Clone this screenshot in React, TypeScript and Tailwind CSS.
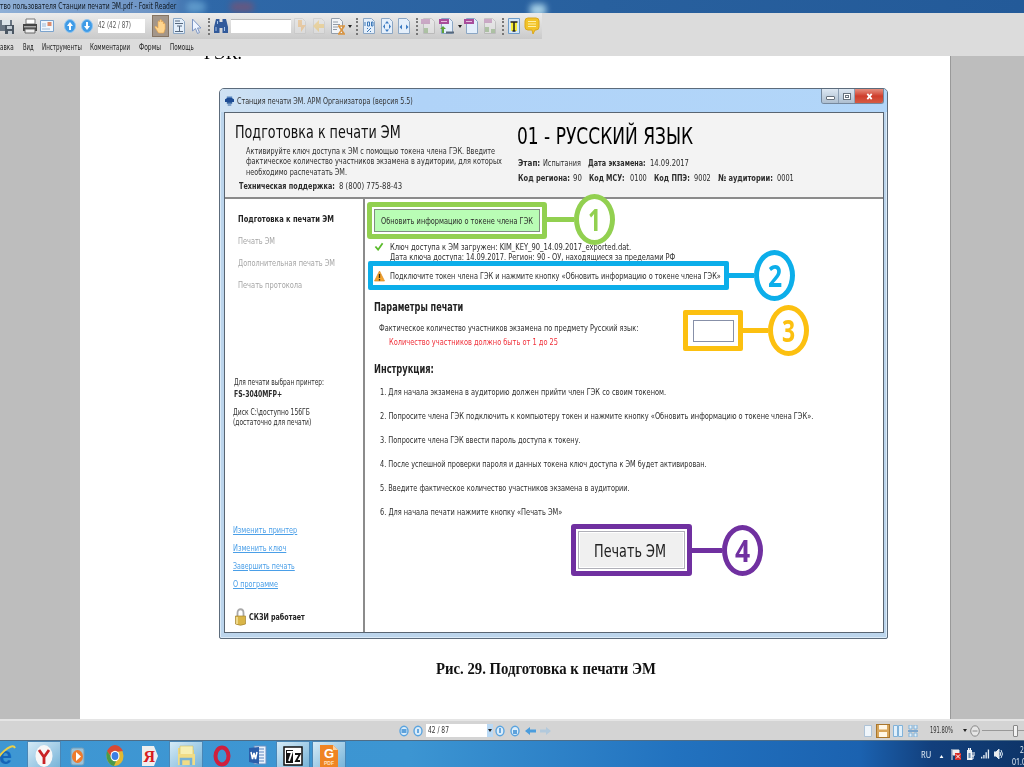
import { useLayoutEffect, useRef, type ReactNode } from "react";

/* Single line of text, condensed or stretched to the width of its box. */
function Fit({ className = "", children }: { className?: string; children: ReactNode }) {
  const box = useRef<HTMLDivElement>(null);
  const line = useRef<HTMLSpanElement>(null);
  useLayoutEffect(() => {
    if (box.current && line.current) {
      const ratio = box.current.clientWidth / line.current.offsetWidth;
      line.current.style.transform = `scaleX(${ratio})`;
    }
  }, []);
  return (
    <div ref={box} className={`flex shrink-0 items-center whitespace-nowrap ${className}`}>
      <span ref={line} className="inline-block shrink-0 origin-left">
        {children}
      </span>
    </div>
  );
}

function Ico({ className = "", children }: { className?: string; children: ReactNode }) {
  return (
    <svg viewBox="0 0 16 20" className={`h-5 w-4 shrink-0 ${className}`} fill="none">
      {children}
    </svg>
  );
}

const Dots = ({ className = "" }: { className?: string }) => (
  <div className={`h-[17px] w-0.5 shrink-0 border-l-2 border-dotted border-[#777] ${className}`} />
);

const Caret = ({ className = "" }: { className?: string }) => (
  <svg viewBox="0 0 4 3" className={`h-[3px] w-1 shrink-0 ${className}`}>
    <path d="M0 0h4L2 3z" fill="#222" />
  </svg>
);

const Sheet = ({ tint = "#e4effb", line = "#8ba6c4" }: { tint?: string; line?: string }) => (
  <path d="M2.5 2.5h8l3 3v12h-11z" fill={tint} stroke={line} />
);

function ArrowBall({ down = false, className = "" }: { down?: boolean; className?: string }) {
  return (
    <Ico className={className}>
      <ellipse cx="8" cy="10" rx="5.500" ry="6.500" fill="#3f9be6" stroke="#8fc4f0" />
      <path d={down ? "M8 14l-3-4h2V6h2v4h2z" : "M8 6l-3 4h2v4h2v-4h2z"} fill="#fff" />
    </Ico>
  );
}

function TitleBar() {
  return (
    <div className="flex h-[13px] shrink-0 items-center overflow-hidden bg-[linear-gradient(90deg,#8fafd6_0,#6d94c5_150px,#2f68a8_200px,#28609e_600px,#235a99_100%)] text-[9px] text-[#101820]">
      <Fit className="h-[13px] w-[176px]">тво пользователя Станции печати ЭМ.pdf - Foxit Reader</Fit>
      <div className="ml-2.5 h-3 w-5 rounded-full bg-[#79b6df] opacity-60 blur-[3px]" />
      <div className="ml-6 h-2.5 w-6 rounded-full bg-[#8c4d66] opacity-60 blur-[3px]" />
      <div className="ml-[276px] mt-1.5 h-3 w-4 rounded bg-[#a5cfe6] blur-[3px]" />
    </div>
  );
}

function Toolbar() {
  return (
    <div className="flex h-[26px] w-[542px] items-center overflow-hidden bg-linear-to-b from-[#ececec] to-[#cacaca]">
      <Ico>
        <path d="M0 4h12v11H0z" fill="#697582" />
        <path d="M2 4h8v5H2z" fill="#dce3e8" />
        <path d="M5 9h9v9H5z" fill="#4c5763" />
        <path d="M7 10h5v3H7zM8 15h4v3H8z" fill="#c3ccd4" />
      </Ico>
      <Ico className="ml-1.5">
        <path d="M4 3h9v5H4z" fill="#fff" stroke="#777" />
        <path d="M1 8h14v7H1z" fill="#454545" />
        <path d="M2 10h12v1.5H2z" fill="#aaa" />
        <path d="M3 13h10v4H3z" fill="#eee" stroke="#666" />
      </Ico>
      <Ico className="ml-px">
        <path d="M1.500 4.500h13v11h-13z" fill="#eff6fd" stroke="#7ba3cd" />
        <path d="M8.500 6h4v4h-4z" fill="#dc8c6c" />
        <path d="M3 8h4M3 10h4M3 13h8" stroke="#9eb9d6" />
      </Ico>
      <ArrowBall className="ml-[7px]" />
      <ArrowBall down className="ml-px" />
      <div className="ml-[3px] h-[14px] w-[47px] shrink-0 bg-white text-[8.500px] text-[#555]">
        <Fit className="h-[12px] w-[33px]">42 (42 / 87)</Fit>
      </div>
      <div className="ml-[7px] flex h-[22px] w-[17px] shrink-0 items-center justify-center border border-[#857463] bg-[#a3968a]">
        <Ico>
          <path
            d="M5.500 17L2 11.500c-.5-1 .7-1.700 1.500-.8L5 12V6c0-1.300 1.600-1.300 1.800 0V4.500c0-1.300 1.700-1.300 1.800 0V6c.1-1.200 1.700-1.100 1.800.1V8c.1-1 1.700-1 1.700.2V13l-1.400 4z"
            fill="#ffd58e"
            stroke="#eaa44a"
            strokeWidth=".6"
          />
        </Ico>
      </div>
      <Ico className="ml-0.5">
        <Sheet />
        <path d="M4 5h5M4 7.500h8M4 15.500h8M6 10h5M8.500 10v5" stroke="#56687e" />
      </Ico>
      <Ico className="ml-px">
        <path d="M4.500 3v12l3-2.500 2 5 2-1-2-4.500h3.500z" fill="#eef4ff" stroke="#7d96c4" />
      </Ico>
      <Dots className="ml-1" />
      <Ico className="ml-[3px]">
        <path d="M3 3h3.500v3h3V3H13l2 8v6H9.500v-5h-3v5H1v-6z" fill="#31599a" />
        <path d="M3 11v4M11.500 11v4M4.500 5v3" stroke="#a5c4ea" />
      </Ico>
      <div className="ml-0.5 h-[14px] w-[60px] shrink-0 border-t border-[#bbb] bg-white" />
      <Ico className="ml-px opacity-50">
        <Sheet tint="#e5e5e5" line="#c3c3c3" />
        <path d="M6 4h4v5h4l-5 7V11H6z" fill="#f0b76c" />
      </Ico>
      <Ico className="ml-[3px] opacity-50">
        <Sheet tint="#e5e5e5" line="#c3c3c3" />
        <path d="M8 4v4h5v4H8v4l-6-6z" fill="#f2c867" />
      </Ico>
      <Ico className="ml-[3px]">
        <path d="M1.500 2.500h8l3 3v12h-11z" fill="#f2f5f8" stroke="#949eaa" />
        <path d="M3 6h5M3 8.500h7M3 11h5M3 13.500h4" stroke="#929ba6" />
        <path d="M8 10h7M8 18h7M9 10.500l5 7M14 10.500l-5 7" stroke="#dc9540" strokeWidth="1.500" />
      </Ico>
      <Caret className="ml-0.5" />
      <Dots className="ml-1" />
      <Ico className="ml-[3px]">
        <Sheet />
        <path d="M4 6v4M6.500 6h2v4h-2zM10.500 6H12v4h-1.500zM6 16l4-4M6 12.500h1M9 15.500h1" stroke="#3d78b7" />
      </Ico>
      <Ico className="ml-0.5">
        <Sheet />
        <path d="M8 5l2 2.500H6zM8 16l2-2.500H6zM4 10.500l2-2.500v5zM12 10.500L10 8v5z" fill="#3d7cc3" />
      </Ico>
      <Ico className="ml-px">
        <Sheet />
        <path d="M3.500 11L6 8.500v5zM12.500 11L10 8.500v5z" fill="#3d7cc3" />
      </Ico>
      <Dots className="ml-1" />
      <Ico className="ml-[3px] opacity-40">
        <Sheet tint="#eee" line="#999" />
        <path d="M0 3h9v5H0z" fill="#a9569d" />
        <path d="M3 12h4v5H3z" fill="#72a45b" />
      </Ico>
      <Ico className="ml-0.5">
        <Sheet />
        <path d="M0 3h10v5H0z" fill="#a84d9b" />
        <path d="M2 5.500h6" stroke="#e5bfe0" />
        <path d="M1 13l3-3 3 3H5v4H3v-4z" fill="#5ca33a" />
        <path d="M7 15.500h8v2H7z" fill="#56677a" />
      </Ico>
      <Caret className="ml-[3px]" />
      <Ico className="ml-0.5">
        <Sheet />
        <path d="M0 3h10v5H0z" fill="#a84d9b" />
        <path d="M2 5.500h6" stroke="#e5bfe0" />
      </Ico>
      <Ico className="ml-0.5 opacity-40">
        <Sheet tint="#eee" line="#999" />
        <path d="M2 3h8v4H2z" fill="#a9569d" />
        <path d="M3 11h4v5H3zM9 13h4v4H9z" fill="#72a45b" />
      </Ico>
      <Dots className="ml-1" />
      <Ico className="ml-0.5">
        <path d="M2.500 2.500h11v15h-11z" fill="#d5e7f8" stroke="#6d9bc7" />
        <path d="M5 6h6v9H5z" fill="#f8ed36" />
        <path d="M4.500 6h7M8 6v9M6.500 15h3" stroke="#222" strokeWidth="1.500" />
      </Ico>
      <Ico className="ml-0.5">
        <path d="M4 2h8q3 0 3 3v6q0 3-3 3h-1l-2 4-1-4H4q-3 0-3-3V5q0-3 3-3z" fill="#f2c328" stroke="#dba71c" />
        <path d="M4 5.500h8M4 8h8M4 10.500h8" stroke="#fff1a8" />
      </Ico>
    </div>
  );
}

function MenuBar() {
  return (
    <div className="flex h-[17px] items-center text-[8.500px] text-[#222]">
      <Fit className="h-4 w-[14px]">авка</Fit>
      <Fit className="ml-[9px] h-4 w-[11px]">Вид</Fit>
      <Fit className="ml-2 h-4 w-10">Инструменты</Fit>
      <Fit className="ml-2 h-4 w-10">Комментарии</Fit>
      <Fit className="ml-[9px] h-4 w-[22px]">Формы</Fit>
      <Fit className="ml-[9px] h-4 w-6">Помощь</Fit>
    </div>
  );
}

/* Numbered oval with its connector, hung on the right edge of a framed box. */
function Callout({ n, className, link, text }: { n: string; className: string; link: string; text: string }) {
  return (
    <div className={`absolute flex items-center ${className}`}>
      <div className={`h-[5px] shrink-0 ${link}`} />
      <div className="flex h-[51px] w-[41px] shrink-0 items-center justify-center rounded-[50%] border-[5.500px] border-current bg-white">
        <Fit className={`h-8 font-[Open_Sans,sans-serif] text-[30px] font-bold ${text}`}>{n}</Fit>
      </div>
    </div>
  );
}

function WindowHeader() {
  return (
    <div className="flex h-[86px] shrink-0 border-b-2 border-[#8b8b8b] bg-[#f3f3f3]">
      <div className="flex w-[292px] shrink-0 flex-col pl-[10px] pt-2">
        <Fit className="h-[23px] w-[166px] text-[18.500px] text-[#111]">Подготовка к печати ЭМ</Fit>
        <div className="ml-[11px] mt-px flex flex-col">
          <Fit className="h-[10.500px] w-[249px]">Активируйте ключ доступа к ЭМ с помощью токена члена ГЭК. Введите</Fit>
          <Fit className="h-[10.500px] w-[256px]">фактическое количество участников экзамена в аудитории, для которых</Fit>
          <Fit className="h-[10.500px] w-[101px]">необходимо распечатать ЭМ.</Fit>
        </div>
        <div className="ml-1 mt-[3px] flex h-3">
          <Fit className="h-3 w-[96px] font-bold">Техническая поддержка:</Fit>
          <Fit className="ml-1 h-3 w-[63px]">8 (800) 775-88-43</Fit>
        </div>
      </div>
      <div className="flex flex-col pt-[9px]">
        <Fit className="h-[29px] w-[176px] text-[22.500px] text-black">01 - РУССКИЙ ЯЗЫК</Fit>
        <div className="ml-px mt-[4px] flex h-4">
          <Fit className="w-[22px] font-bold">Этап:</Fit>
          <Fit className="ml-[3px] w-[38px]">Испытания</Fit>
          <Fit className="ml-[7px] w-[58px] font-bold">Дата экзамена:</Fit>
          <Fit className="ml-1 w-[39px]">14.09.2017</Fit>
        </div>
        <div className="ml-px flex h-[14px]">
          <Fit className="w-[52px] font-bold">Код региона:</Fit>
          <Fit className="ml-[3px] w-[9px]">90</Fit>
          <Fit className="ml-[7px] w-[36px] font-bold">Код МСУ:</Fit>
          <Fit className="ml-[5px] w-[17px]">0100</Fit>
          <Fit className="ml-[7px] w-[36px] font-bold">Код ППЭ:</Fit>
          <Fit className="ml-1 w-[17px]">9002</Fit>
          <Fit className="ml-[7px] w-[55px] font-bold">№ аудитории:</Fit>
          <Fit className="ml-1 w-[17px]">0001</Fit>
        </div>
      </div>
    </div>
  );
}

function Sidebar() {
  return (
    <div className="flex w-[140px] shrink-0 flex-col border-r-2 border-[#8b8b8b] pt-[9px]">
      <div className="flex flex-col pl-[13px] text-[#a5a5a5]">
        <Fit className="h-[22px] w-[96px] font-bold text-[#222]">Подготовка к печати ЭМ</Fit>
        <Fit className="h-[22px] w-[37px]">Печать ЭМ</Fit>
        <Fit className="h-[22px] w-[97px]">Дополнительная печать ЭМ</Fit>
        <Fit className="h-[22px] w-[64px]">Печать протокола</Fit>
      </div>
      <div className="mt-[80px] flex flex-col pl-[9px]">
        <Fit className="h-3 w-[90px]">Для печати выбран принтер:</Fit>
        <Fit className="h-[11px] w-[48px] font-bold">FS-3040MFP+</Fit>
      </div>
      <div className="mt-[8px] flex flex-col pl-2">
        <Fit className="h-[10px] w-[77px]">Диск C:\доступно 156ГБ</Fit>
        <Fit className="h-[10px] w-[78px]">(достаточно для печати)</Fit>
      </div>
      <div className="mt-[94px] flex flex-col pl-2 text-[#4a9fe8] underline">
        <Fit className="h-[18px] w-[64px]">Изменить принтер</Fit>
        <Fit className="h-[18px] w-[53px]">Изменить ключ</Fit>
        <Fit className="h-[18px] w-[62px]">Завершить печать</Fit>
        <Fit className="h-[18px] w-[45px]">О программе</Fit>
      </div>
      <div className="mt-[15px] flex h-[18px] items-center pl-[10px]">
        <svg viewBox="0 0 11 18" className="h-[18px] w-[11px] shrink-0">
          <path d="M2.500 9V5c0-5 6-5 6 0v4" fill="none" stroke="#a9a9a9" strokeWidth="1.800" />
          <path d="M.5 8h10v8q-5 2.500-10 0z" fill="#d9b548" stroke="#a58430" strokeWidth=".7" />
          <path d="M2 9v7" stroke="#f6e5a0" strokeWidth="1.500" />
        </svg>
        <Fit className="ml-[3px] h-4 w-[56px] font-bold text-[#222]">СКЗИ работает</Fit>
      </div>
    </div>
  );
}

const steps = [
  { w: "w-[286px]", t: "1. Для начала экзамена в аудиторию должен прийти член ГЭК со своим токеном." },
  { w: "w-[433px]", t: "2. Попросите члена ГЭК подключить к компьютеру токен и нажмите кнопку «Обновить информацию о токене члена ГЭК»." },
  { w: "w-[201px]", t: "3. Попросите члена ГЭК ввести пароль доступа к токену." },
  { w: "w-[327px]", t: "4. После успешной проверки пароля и данных токена ключ доступа к ЭМ будет активирован." },
  { w: "w-[250px]", t: "5. Введите фактическое количество участников экзамена в аудитории." },
  { w: "w-[182px]", t: "6. Для начала печати нажмите кнопку «Печать ЭМ»" },
];

function MainPane() {
  return (
    <div className="flex min-w-0 flex-1 flex-col items-start pl-[2px] pt-[3px]">
      <div className="relative z-10 flex h-[37px] w-[180px] shrink-0 rounded-[3px] border-[5.500px] border-[#92d050] bg-white p-[2px]">
        <button className="flex flex-1 items-center justify-center border border-[#7f8f80] bg-[#b9fdb5]">
          <Fit className="h-4 w-[152px]">Обновить информацию о токене члена ГЭК</Fit>
        </button>
        <Callout n="1" className="-top-[13px] left-[173px] text-[#92d050]" link="w-[29px] bg-[#92d050]" text="w-[13px]" />
      </div>
      <div className="mt-[2px] flex h-[20px] w-[400px] shrink-0 pl-[7px]">
        <svg viewBox="0 0 10 10" className="mt-[1px] h-[9px] w-[10px] shrink-0">
          <path d="M1 5l3 3.500L9 1.500" fill="none" stroke="#5bbb2c" strokeWidth="2" />
        </svg>
        <div className="ml-[6px] flex flex-col">
          <Fit className="h-[10.500px] w-[241px]">Ключ доступа к ЭМ загружен: KIM_KEY_90_14.09.2017_exported.dat.</Fit>
          <Fit className="h-[10.500px] w-[285px]">Дата ключа доступа: 14.09.2017. Регион: 90 - ОУ, находящиеся за пределами РФ</Fit>
        </div>
      </div>
      <div className="relative ml-px flex h-[29px] w-[361px] shrink-0 items-center rounded-[2px] border-[5px] border-[#0caeea] bg-white pl-[1px]">
        <svg viewBox="0 0 11 11" className="h-[12px] w-[11px] shrink-0">
          <path d="M5.500.5l5 10H.5z" fill="#f3a32e" stroke="#dc8a1e" strokeWidth=".7" />
          <path d="M5.500 3.500v4M5.500 8.500V10" stroke="#3b2a12" strokeWidth="1.300" />
        </svg>
        <Fit className="ml-[5px] h-4 w-[331px]">Подключите токен члена ГЭК и нажмите кнопку «Обновить информацию о токене члена ГЭК»</Fit>
        <Callout n="2" className="-top-[16px] left-[355px] text-[#0caeea]" link="w-[26px] bg-[#0caeea]" text="w-[14px]" />
      </div>
      <div className="mt-[9px] flex h-[62px] w-full shrink-0 items-start pl-[7px]">
        <div className="flex w-[309px] shrink-0 flex-col">
          <Fit className="h-[18px] w-[89px] text-[11.500px] font-bold text-[#222]">Параметры печати</Fit>
          <Fit className="ml-[5px] mt-1 h-[14px] w-[259px]">Фактическое количество участников экзамена по предмету Русский язык:</Fit>
          <Fit className="ml-[15px] h-[14px] w-[169px] text-[#f0303a]">Количество участников должно быть от 1 до 25</Fit>
        </div>
        <div className="relative mt-[11px] flex h-[41px] w-[60px] shrink-0 items-center justify-center rounded-[2px] border-[5.500px] border-[#fcc010] bg-white">
          <div className="h-[22px] w-[41px] border border-[#8790a8] bg-white" />
          <Callout n="3" className="-top-[10px] left-[54px] text-[#fcc010]" link="w-[26px] bg-[#fcc010]" text="w-[13px]" />
        </div>
      </div>
      <Fit className="ml-[7px] h-[18px] w-[60px] text-[11.500px] font-bold text-[#222]">Инструкция:</Fit>
      <div className="ml-[13px] mt-[1px] flex flex-col">
        {steps.map((s) => (
          <Fit key={s.t} className={`h-6 ${s.w}`}>
            {s.t}
          </Fit>
        ))}
      </div>
      <div className="relative ml-[204px] flex h-[52px] w-[121px] shrink-0 rounded-[3px] border-[5px] border-[#7030a0] bg-white p-[2px]">
        <button className="flex flex-1 items-center justify-start border border-[#b0b0b8] bg-[#f0f0f0] pl-[15px] pt-[2px] shadow-[inset_0_0_0_1px_#fff]">
          <Fit className="h-6 w-[72px] text-[17px] text-[#222]">Печать ЭМ</Fit>
        </button>
        <Callout n="4" className="-top-[4px] left-[115px] text-[#7030a0]" link="w-[31px] bg-[#7030a0]" text="w-[15px]" />
      </div>
    </div>
  );
}

function AppWindow() {
  return (
    <div className="ml-[139px] mt-3 flex h-[551px] w-[669px] shrink-0 flex-col rounded-t-[5px] rounded-b-[2px] border border-[#5c6b7b] bg-[#bcd5ec] pl-1 pr-[3px] pb-[5px] text-[9.500px] leading-none text-[#2c2c2c] shadow-[inset_0_0_0_1px_#dcebf8]">
      <div className="-ml-1 -mr-[3px] flex h-[23px] shrink-0 items-center rounded-t-[4px] bg-linear-to-r from-[#cfe2f3] via-[#b0d3f8] via-30% to-[#b2d6f9] pl-[5px]">
        <svg viewBox="0 0 10 12" className="h-3 w-[9px] shrink-0">
          <path d="M2 1h6v3H2z" fill="#5583bd" />
          <path d="M0 4q5-3 10 0v3H0z" fill="#1d4c94" />
          <path d="M2 7h6v2H2zM3 10h4v1H3z" fill="#33629f" />
        </svg>
        <Fit className="ml-[3px] h-4 w-[176px] text-[#333]">Станция печати ЭМ. АРМ Организатора (версия 5.5)</Fit>
        <div className="ml-auto mr-[3px] flex h-[15px] w-[63px] self-start overflow-hidden rounded-b-[3px] border border-t-0 border-[#75889d]">
          <div className="flex w-[17px] items-center justify-center border-r border-[#8da0b5] bg-linear-to-b from-[#dce7f2] to-[#aebfd0]">
            <div className="mt-1 h-1 w-[9px] rounded-[1px] border border-[#68727d] bg-white" />
          </div>
          <div className="flex w-[16px] items-center justify-center border-r border-[#8da0b5] bg-linear-to-b from-[#dce7f2] to-[#aebfd0]">
            <div className="flex h-[7px] w-2 items-center justify-center border border-[#68727d] bg-white">
              <div className="h-[3px] w-1 border border-[#68727d]" />
            </div>
          </div>
          <div className="flex flex-1 items-center justify-center bg-linear-to-b from-[#e48e7f] via-[#cf3d2c] to-[#d55b43]">
            <svg viewBox="0 0 8 8" className="size-[7px]">
              <path d="M1.500 1l5 6M6.500 1l-5 6" stroke="#fff" strokeWidth="2" />
            </svg>
          </div>
        </div>
      </div>
      <div className="flex min-h-0 flex-1 flex-col border border-[#596572] bg-white">
        <WindowHeader />
        <div className="flex min-h-0 flex-1">
          <Sidebar />
          <MainPane />
        </div>
      </div>
    </div>
  );
}

function Nav({ d, className = "" }: { d: string; className?: string }) {
  return (
    <svg viewBox="0 0 10 12" className={`h-3 w-2.5 shrink-0 ${className}`} fill="none">
      <ellipse cx="5" cy="6" rx="4" ry="4.800" fill="#dcedfa" stroke="#5ba4df" strokeWidth="1.400" />
      <path d={d} stroke="#3589d1" strokeWidth="1.400" />
    </svg>
  );
}

function StatusBar() {
  return (
    <div className="flex h-[21px] shrink-0 items-center border-t-2 border-[#e5e5e5] bg-[#d4d4d4] pl-[399px] text-[8.500px] text-[#333]">
      <Nav d="M2.500 5h5M2.500 7h5" />
      <Nav d="M5 4v4" className="ml-1" />
      <div className="ml-[3px] flex h-[13px] w-[67px] shrink-0 items-center justify-between bg-white">
        <Fit className="ml-[2px] h-3 w-[21px]">42 / 87</Fit>
        <div className="flex h-[13px] w-[6px] items-center justify-center bg-[#b9d9f5]">
          <Caret />
        </div>
      </div>
      <Nav d="M5 3v5" className="ml-[2px]" />
      <Nav d="M3 6h4M3 8h4" className="ml-[5px]" />
      <svg viewBox="0 0 11 10" className="ml-[5px] h-2.5 w-[11px] shrink-0">
        <path d="M0 5l5-4v2.500h6v3H5V9z" fill="#4b9ddd" />
      </svg>
      <svg viewBox="0 0 11 10" className="ml-1 h-2.5 w-[11px] shrink-0">
        <path d="M11 5L6 1v2.500H0v3h6V9z" fill="#b2c9dc" />
      </svg>
      <svg viewBox="0 0 10 12" className="ml-[312px] h-3 w-2.5 shrink-0">
        <path d="M1.500.5h7v11h-7z" fill="#f0f6fb" stroke="#aec3d7" />
      </svg>
      <div className="ml-[3px] flex h-[14px] w-[14px] shrink-0 items-center justify-center border border-[#a9762c] bg-[#d8a65b]">
        <svg viewBox="0 0 10 12" className="h-3 w-2.5">
          <path d="M1 0h8v4.500H1zM1 7h8v5H1z" fill="#fff7e7" />
        </svg>
      </div>
      <svg viewBox="0 0 10 12" className="ml-[3px] h-3 w-2.5 shrink-0">
        <path d="M.5.5h4v11h-4zM5.500.5h4v11h-4z" fill="#e1f0fb" stroke="#81b2d9" />
      </svg>
      <svg viewBox="0 0 10 12" className="ml-[5px] h-3 w-2.5 shrink-0">
        <path d="M1 0h3v4H1zM6 0h3v4H6zM1 8h3v4H1zM6 8h3v4H6z" fill="#e1f0fb" stroke="#81b2d9" />
        <path d="M0 6h10" stroke="#5f97cd" strokeWidth="1.500" />
      </svg>
      <Fit className="ml-3 h-3 w-[23px]">191.80%</Fit>
      <Caret className="ml-[10px]" />
      <svg viewBox="0 0 10 12" className="ml-[3px] h-3 w-2.5 shrink-0" fill="none" stroke="#888">
        <ellipse cx="5" cy="6" rx="4.300" ry="5.200" fill="#e5e5e5" />
        <path d="M2.500 6h5" />
      </svg>
      <div className="ml-[2px] h-px w-[31px] shrink-0 bg-[#999]" />
      <div className="h-3 w-[5px] shrink-0 rounded-[1px] border border-[#888] bg-[#f2f2f2]" />
      <div className="h-px w-[7px] shrink-0 bg-[#999]" />
    </div>
  );
}

function Task({ active = false, className = "", children }: { active?: boolean; className?: string; children: ReactNode }) {
  return (
    <div
      className={`flex h-[27px] shrink-0 items-center justify-center overflow-hidden pt-0.5 ${
        active ? "w-[34px] border-x border-t border-[#4a86b5] bg-linear-to-br from-[#d4eaf6] to-[#76b3d8]" : "w-5"
      } ${className}`}
    >
      <svg viewBox="0 0 20 24" className="h-6 w-5 shrink-0">
        {children}
      </svg>
    </div>
  );
}

function Taskbar() {
  return (
    <div className="flex h-[27px] shrink-0 overflow-hidden border-t border-[#4e6d87] bg-[linear-gradient(90deg,#3f97d3_0,#3c95d2_40%,#2272bf_66%,#1b62b0_84%,#123f7c_91%,#0e3569_100%)] font-sans">
      <Task className="-ml-1">
        <text x="3" y="20" fontSize="23" fontWeight="bold" fill="#1565b8" fontFamily="Liberation Sans">e</text>
        <path d="M0 20C-1 14 16-3 19 4" fill="none" stroke="#eccf47" strokeWidth="2" />
      </Task>
      <Task active className="ml-[11px]">
        <ellipse cx="10" cy="12" rx="8.500" ry="11" fill="#f7f7f7" />
        <path d="M5 6l5 7 5-7M10 12v8" fill="none" stroke="#c92225" strokeWidth="2.800" />
      </Task>
      <Task className="ml-[7px]">
        <rect x="3" y="4" width="13" height="17" rx="2" fill="#9cc3d9" stroke="#739db8" />
        <ellipse cx="9.500" cy="12.500" rx="5.500" ry="6.500" fill="#ee7b2d" />
        <path d="M8 8l5 4.500L8 17z" fill="#fff" />
      </Task>
      <Task className="ml-[17px]">
        <ellipse cx="10" cy="12" rx="8.500" ry="10" fill="#e1b932" />
        <path d="M2 7C6-1 14-1 18 7l-8 1-3 6z" fill="#d94a35" />
        <path d="M2 7c-2 8 2 14 7 15l3-7-5-1z" fill="#4b9a48" />
        <ellipse cx="10" cy="12" rx="4.500" ry="5.200" fill="#fff" />
        <ellipse cx="10" cy="12" rx="3.400" ry="4" fill="#3d7fe3" />
      </Task>
      <Task className="ml-[15px]">
        <path d="M2 2h12l4 10-4 10H2z" fill="#eee" />
        <text x="3.500" y="18" fontSize="16" fontWeight="bold" fill="#d71c20" fontFamily="Liberation Serif">Я</text>
      </Task>
      <Task active className="ml-[9px]">
        <path d="M2 4h6l1 2h9v15H2z" fill="#ecd781" />
        <path d="M4 2h13v10H4z" fill="#f6efb3" stroke="#c8b553" strokeWidth=".5" />
        <path d="M2 10h17v11H2z" fill="#f0dc86" />
        <path d="M5 21v-6h10v6" fill="none" stroke="#76b1d5" strokeWidth="2.500" />
      </Task>
      <Task className="ml-[9px]">
        <ellipse cx="10" cy="12" rx="6.500" ry="8.500" fill="none" stroke="#d01f3d" strokeWidth="4" />
      </Task>
      <Task className="ml-4">
        <path d="M6 2h12v18H6z" fill="#eaf2fb" stroke="#6b8fc0" />
        <path d="M9 5h7M9 8h7M9 11h7M9 14h7M9 17h7" stroke="#5d86be" />
        <path d="M1 4l10-1v17L1 18z" fill="#2a5eaa" />
        <path d="M3 8l1.500 7L6 9l1.500 6L9 8" fill="none" stroke="#fff" strokeWidth="1.500" />
      </Task>
      <Task active className="ml-2">
        <path d="M1 3h18v18H1z" fill="#fff" stroke="#111" strokeWidth="1.500" />
        <path d="M3 6h7v13H3z" fill="#111" />
        <path d="M4 8h5l-3 9" fill="none" stroke="#fff" strokeWidth="1.800" />
        <path d="M12 10h5l-4 7h4" fill="none" stroke="#111" strokeWidth="1.800" />
      </Task>
      <Task active className="ml-[2px]">
        <path d="M1 1h13l5 5v17H1z" fill="#ef8423" />
        <path d="M14 1l5 5h-5z" fill="#fbd0a0" />
        <text x="5" y="14" fontSize="13" fontWeight="bold" fill="#fff" fontFamily="Liberation Sans">G</text>
        <text x="5" y="21" fontSize="5" fontWeight="bold" fill="#ffe1bd" fontFamily="Liberation Sans">PDF</text>
      </Task>
      <div className="ml-auto flex h-[26px] w-[103px] shrink-0 items-center text-[9px] text-[#e2edf7]">
        <Fit className="h-4 w-[10px]">RU</Fit>
        <svg viewBox="0 0 5 4" className="ml-2 mt-1 h-[3px] w-[5px] shrink-0">
          <path d="M0 4h5L2.500 0z" fill="#fff" />
        </svg>
        <svg viewBox="0 0 10 12" className="ml-[7px] h-3 w-2.5 shrink-0">
          <path d="M1 1v11M2 2h6v5H2z" fill="#eee" stroke="#eee" />
          <path d="M4 5h6v7H4z" fill="#d52b25" />
          <path d="M5 6.500l4 4M9 6.500l-4 4" stroke="#fff" />
        </svg>
        <svg viewBox="0 0 9 12" className="ml-[5px] h-3 w-[9px] shrink-0">
          <path d="M1 2h5v10H1z" fill="#e9eef3" />
          <path d="M2.500 0h2v2h-2zM6 4v4h2V4M7 8v3H4" fill="none" stroke="#fff" />
          <path d="M2.500 5h2v5h-2z" fill="#6c8eb0" />
        </svg>
        <svg viewBox="0 0 10 10" className="ml-[6px] h-2.5 w-[9px] shrink-0">
          <path d="M0 8h1.500v2H0zM2.500 6H4v4H2.500zM5 3h1.500v7H5zM7.500 0H9v10H7.500z" fill="#e7eff6" />
        </svg>
        <svg viewBox="0 0 9 12" className="ml-1 h-3 w-[9px] shrink-0" fill="none" stroke="#dce8f2">
          <path d="M0 4h2l3-3v10L2 8H0z" fill="#eee" />
          <path d="M6 4q1.500 2 0 4M7 2q3 4 0 8" />
        </svg>
        <div className="ml-[9px] mt-[3px] flex w-[16px] shrink-0 flex-col overflow-hidden whitespace-nowrap">
          <Fit className="ml-[8px] h-[11px] w-[13px]">22:1</Fit>
          <Fit className="h-[12px] w-[36px]">01.03.2018</Fit>
        </div>
      </div>
    </div>
  );
}

export default function App() {
  return (
    <div className="flex h-[767px] w-[1024px] flex-col overflow-hidden bg-[#d9d9d9] font-['DejaVu_Sans_Condensed','DejaVu_Sans',sans-serif] leading-none">
      <TitleBar />
      <div className="h-[43px] shrink-0 bg-[#dcdcdc]">
        <Toolbar />
        <MenuBar />
      </div>
      <div className="flex h-[663px] shrink-0 bg-[#bdbdbd] pl-[80px] pr-[73px]">
        <div className="flex min-w-0 flex-1 flex-col overflow-hidden border-r border-[#999] bg-white">
          <div className="h-5 shrink-0 overflow-hidden pl-[124px] font-[Liberation_Serif,serif] text-[18px] text-black">
            <Fit className="-mt-[12px] h-[18px] w-[38px]">ГЭК.</Fit>
          </div>
          <AppWindow />
          <Fit className="ml-[356px] mt-[18px] h-6 w-[220px] font-[Liberation_Serif,serif] text-[17.500px] font-bold text-[#111]">
            Рис. 29. Подготовка к печати ЭМ
          </Fit>
        </div>
      </div>
      <StatusBar />
      <Taskbar />
    </div>
  );
}
